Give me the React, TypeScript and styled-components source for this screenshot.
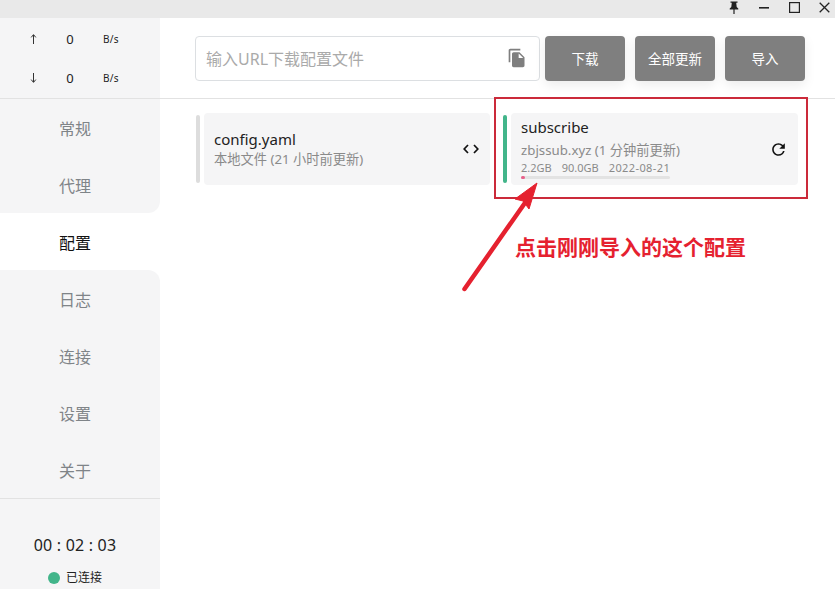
import React from "react";
import styled, { createGlobalStyle } from "styled-components";
import { MdFileCopy, MdRefresh } from "react-icons/md";

const Global = createGlobalStyle`
  html, body { margin: 0; padding: 0; background: #fff; }
  body { font-family: "Noto Sans", "Noto Sans CJK SC", sans-serif; }
  * { box-sizing: border-box; }
`;

const Win = styled.div`
  position: relative;
  width: 835px;
  height: 589px;
  overflow: hidden;
  display: flex;
  flex-direction: column;
`;

const TitleBar = styled.div`
  height: 18px;
  flex: none;
  background: #e9e9e9;
  display: flex;
  justify-content: flex-end;
  color: #111;
`;

const WinButton = styled.div`
  width: 30px;
  height: 15px;
  display: flex;
  align-items: center;
  justify-content: center;
  transform: translateX(4px);
`;

const Body = styled.div`
  flex: 1;
  display: flex;
  min-height: 0;
`;

const Sidebar = styled.aside`
  width: 160px;
  flex: none;
  display: flex;
  flex-direction: column;
  background: #fff;
`;

const Speed = styled.div`
  height: 81px;
  background: #f5f5f6;
  border-bottom: 1px solid #e2e2e2;
  display: grid;
  grid-template-rows: 1fr 1fr;
  padding: 1px 0 0;
`;

const SpeedRow = styled.div`
  display: grid;
  grid-template-columns: 24px 50px 32px;
  padding-left: 21px;
  align-items: center;
  justify-items: center;
  color: #222;
`;

const SpeedValue = styled.span`
  font-size: 13px;
`;

const SpeedUnit = styled.span`
  font-size: 10px;
  letter-spacing: 0.3px;
`;

const Nav = styled.nav`
  display: flex;
  flex-direction: column;
`;

const NavItem = styled.div<{ $active?: boolean; $before?: boolean; $after?: boolean }>`
  height: 57px;
  padding: 0 10px 0 0;
  display: flex;
  align-items: center;
  justify-content: center;
  font-size: 16px;
  color: ${(p) => (p.$active ? "#111" : "#7f8488")};
  background: ${(p) => (p.$active ? "#fff" : "#f5f5f6")};
  border-bottom-right-radius: ${(p) => (p.$before ? "12px" : "0")};
  border-top-right-radius: ${(p) => (p.$after ? "12px" : "0")};
`;

const Footer = styled.div`
  flex: 1;
  background: #f5f5f6;
  border-top: 1px solid #e2e2e2;
  display: flex;
  flex-direction: column;
  align-items: center;
  padding: 35px 10px 0 0;
`;

const Clock = styled.div`
  font-size: 16px;
  line-height: 22px;
  color: #222;
  letter-spacing: 0.2px;
`;

const Status = styled.div`
  margin-top: 14px;
  display: flex;
  align-items: center;
  gap: 6px;
  font-size: 12px;
  line-height: 16px;
  color: #222;
`;

const Dot = styled.span`
  width: 12px;
  height: 12px;
  border-radius: 50%;
  background: #42b58a;
`;

const Main = styled.main`
  flex: 1;
  min-width: 0;
  display: flex;
  flex-direction: column;
`;

const Header = styled.header`
  height: 81px;
  flex: none;
  border-bottom: 1px solid #e2e2e2;
  padding: 18px 0 0 35px;
  display: flex;
  align-items: flex-start;
  gap: 10px;
`;

const UrlInput = styled.div`
  width: 345px;
  height: 45px;
  margin-right: -5px;
  border: 1px solid #dcdfe2;
  border-radius: 4px;
  padding: 0 12px 2px 10px;
  display: flex;
  align-items: center;
  justify-content: space-between;
  font-size: 16px;
  color: #aaaaaa;
  svg { color: #7f7f7f; }
`;

const ActionButton = styled.div`
  width: 80px;
  height: 45px;
  border-radius: 4px;
  background: #7f7f7f;
  color: #fff;
  font-size: 13.5px;
  padding-bottom: 2px;
  display: flex;
  align-items: center;
  justify-content: center;
  box-shadow: 0 4px 12px rgba(0, 0, 0, 0.08);
`;

const Profiles = styled.section`
  display: grid;
  grid-template-columns: 294px 295px;
  column-gap: 13px;
  padding: 14px 0 0 36px;
`;

const Profile = styled.div`
  height: 72px;
  display: flex;
  align-items: center;
  gap: 4px;
`;

const Mark = styled.div<{ $color: string }>`
  width: 4px;
  height: 68px;
  flex: none;
  border-radius: 2px;
  background: ${(p) => p.$color};
`;

const ProfileCard = styled.div`
  flex: 1;
  height: 72px;
  border-radius: 4px;
  background: #f5f5f6;
  display: flex;
  align-items: center;
  justify-content: space-between;
  padding: 0 10px;
`;

const ProfileInfo = styled.div<{ $lift?: number }>`
  display: flex;
  flex-direction: column;
  width: 150px;
  white-space: nowrap;
  padding-bottom: ${(p) => p.$lift ?? 0}px;
`;

const ProfileName = styled.div`
  font-size: 15px;
  line-height: 20px;
  color: #222;
`;

const ProfileMeta = styled.div<{ $gap: number }>`
  margin-top: ${(p) => p.$gap}px;
  font-size: 13.25px;
  line-height: 20px;
  color: #8a8a8a;
`;

const Usage = styled.div`
  margin-top: 1px;
  font-size: 11px;
  line-height: 14px;
  color: #8a8a8a;
  display: flex;
  gap: 10px;
`;

const UsageDate = styled.span`
  letter-spacing: 0.4px;
`;

const Progress = styled.div`
  margin-top: 1px;
  width: 149px;
  height: 3px;
  border-radius: 2px;
  background: #e3e3e3;
`;

const ProgressFill = styled.div`
  height: 100%;
  border-radius: 2px;
  background: #e8608a;
`;

const CardIcon = styled.div<{ $shift: number }>`
  display: flex;
  color: #111;
  margin-right: ${(p) => p.$shift}px;
`;

const Callout = styled.div`
  position: absolute;
  left: 494px;
  top: 97px;
  width: 314px;
  height: 102px;
  border: 2px solid #cb2a3a;
  pointer-events: none;
`;

const CalloutText = styled.div`
  position: absolute;
  left: 515px;
  top: 231px;
  font-family: "Noto Sans CJK SC", sans-serif;
  font-size: 21px;
  line-height: 30px;
  font-weight: 700;
  color: #e5212f;
  white-space: nowrap;
`;

const CalloutArrow = styled.svg`
  position: absolute;
  left: 455px;
  top: 175px;
  pointer-events: none;
`;

const nav = ["常规", "代理", "配置", "日志", "连接", "设置", "关于"];
const activeIndex = 2;

function SpeedIcon({ down }: { down?: boolean }) {
  return (
    <svg width="7" height="10" viewBox="0 0 7 10">
      <path
        d={down ? "M3.5 0v9M1.2 6.6l2.3 2.8 2.3-2.8" : "M3.5 10V1M1.2 3.4L3.5.6l2.3 2.8"}
        stroke="#333"
        strokeWidth="1"
        fill="none"
      />
    </svg>
  );
}

export default function App() {
  const used = (2.2 / 90) * 100;
  return (
    <Win>
      <Global />
      <TitleBar>
        <WinButton>
          <svg width="12" height="13" viewBox="0 0 12 13">
            <path d="M2.5 0.5h7v1.2H8.2l.5 4.2 1.6 1.5v1H6.6V13h-1.2V8.4H1.7v-1l1.6-1.5.5-4.2H2.5z" fill="#222" />
          </svg>
        </WinButton>
        <WinButton>
          <svg width="10" height="2" viewBox="0 0 10 2">
            <rect width="10" height="1.6" fill="#222" />
          </svg>
        </WinButton>
        <WinButton>
          <svg width="11" height="11" viewBox="0 0 11 11">
            <rect x="0.6" y="0.6" width="9.8" height="9.8" fill="none" stroke="#222" strokeWidth="1.2" />
          </svg>
        </WinButton>
        <WinButton>
          <svg width="11" height="11" viewBox="0 0 11 11">
            <path d="M0.7 0.7l9.6 9.6M10.3 0.7l-9.6 9.6" stroke="#222" strokeWidth="1.3" fill="none" />
          </svg>
        </WinButton>
      </TitleBar>
      <Body>
        <Sidebar>
          <Speed>
            <SpeedRow>
              <SpeedIcon />
              <SpeedValue>0</SpeedValue>
              <SpeedUnit>B/s</SpeedUnit>
            </SpeedRow>
            <SpeedRow>
              <SpeedIcon down />
              <SpeedValue>0</SpeedValue>
              <SpeedUnit>B/s</SpeedUnit>
            </SpeedRow>
          </Speed>
          <Nav>
            {nav.map((label, i) => (
              <NavItem
                key={label}
                $active={i === activeIndex}
                $before={i === activeIndex - 1}
                $after={i === activeIndex + 1}
              >
                {label}
              </NavItem>
            ))}
          </Nav>
          <Footer>
            <Clock>00 : 02 : 03</Clock>
            <Status>
              <Dot />
              已连接
            </Status>
          </Footer>
        </Sidebar>
        <Main>
          <Header>
            <UrlInput>
              输入URL下载配置文件
              <MdFileCopy size={20} />
            </UrlInput>
            <ActionButton>下载</ActionButton>
            <ActionButton>全部更新</ActionButton>
            <ActionButton>导入</ActionButton>
          </Header>
          <Profiles>
            <Profile>
              <Mark $color="#dddddd" />
              <ProfileCard>
                <ProfileInfo>
                  <ProfileName>config.yaml</ProfileName>
                  <ProfileMeta $gap={0}>本地文件 (21 小时前更新)</ProfileMeta>
                </ProfileInfo>
                <CardIcon $shift={1}>
                  <svg width="16" height="10" viewBox="0 0 16 10">
                    <path d="M5 1L1.2 5 5 9M11 1l3.8 4L11 9" fill="none" stroke="#111" strokeWidth="1.7" />
                  </svg>
                </CardIcon>
              </ProfileCard>
            </Profile>
            <Profile>
              <Mark $color="#42b58a" />
              <ProfileCard>
                <ProfileInfo $lift={2}>
                  <ProfileName>subscribe</ProfileName>
                  <ProfileMeta $gap={3}>zbjssub.xyz (1 分钟前更新)</ProfileMeta>
                  <Usage>
                    <span>2.2GB</span>
                    <span>90.0GB</span>
                    <UsageDate>2022-08-21</UsageDate>
                  </Usage>
                  <Progress>
                    <ProgressFill style={{ width: `${used}%` }} />
                  </Progress>
                </ProfileInfo>
                <CardIcon $shift={0}>
                  <MdRefresh size={19} />
                </CardIcon>
              </ProfileCard>
            </Profile>
          </Profiles>
        </Main>
      </Body>
      <Callout />
      <CalloutText>点击刚刚导入的这个配置</CalloutText>
      <CalloutArrow width="95" height="125" viewBox="0 0 95 125">
        <path d="M9.5 114L72 25" stroke="#e5212f" strokeWidth="4.5" strokeLinecap="round" fill="none" />
        <path d="M82 8L60 24l8 2 6 8z" fill="#e5212f" stroke="#e5212f" strokeWidth="1" />
      </CalloutArrow>
    </Win>
  );
}
